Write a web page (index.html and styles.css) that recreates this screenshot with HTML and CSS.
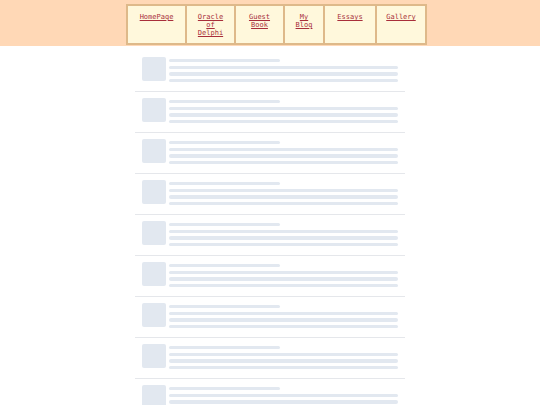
FILE: index.html
```html
<!DOCTYPE html>
<html>
<head>
<meta charset="utf-8">
<link rel="stylesheet" href="styles.css">
</head>
<body>
<header class="top">
  <nav class="nav">
    <a class="nav-item" href="#">HomePage</a>
    <a class="nav-item" href="#">Oracle<br>of<br>Delphi</a>
    <a class="nav-item" href="#">Guest<br>Book</a>
    <a class="nav-item" href="#">My<br>Blog</a>
    <a class="nav-item" href="#">Essays</a>
    <a class="nav-item" href="#">Gallery</a>
  </nav>
</header>
<main class="list">
  <div class="row"><div class="thumb"></div><div class="lines"><span class="ln short"></span><span class="ln"></span><span class="ln"></span><span class="ln"></span></div></div>
  <div class="row"><div class="thumb"></div><div class="lines"><span class="ln short"></span><span class="ln"></span><span class="ln"></span><span class="ln"></span></div></div>
  <div class="row"><div class="thumb"></div><div class="lines"><span class="ln short"></span><span class="ln"></span><span class="ln"></span><span class="ln"></span></div></div>
  <div class="row"><div class="thumb"></div><div class="lines"><span class="ln short"></span><span class="ln"></span><span class="ln"></span><span class="ln"></span></div></div>
  <div class="row"><div class="thumb"></div><div class="lines"><span class="ln short"></span><span class="ln"></span><span class="ln"></span><span class="ln"></span></div></div>
  <div class="row"><div class="thumb"></div><div class="lines"><span class="ln short"></span><span class="ln"></span><span class="ln"></span><span class="ln"></span></div></div>
  <div class="row"><div class="thumb"></div><div class="lines"><span class="ln short"></span><span class="ln"></span><span class="ln"></span><span class="ln"></span></div></div>
  <div class="row"><div class="thumb"></div><div class="lines"><span class="ln short"></span><span class="ln"></span><span class="ln"></span><span class="ln"></span></div></div>
  <div class="row"><div class="thumb"></div><div class="lines"><span class="ln short"></span><span class="ln"></span><span class="ln"></span><span class="ln"></span></div></div>
</main>
</body>
</html>
```
FILE: styles.css
```css
html, body {
  margin: 0;
  padding: 0;
  background: #ffffff;
  overflow: hidden;
}
body {
  font-family: "DejaVu Sans Mono", monospace;
}
.top {
  background: #ffd8b6;
  height: 46px;
  box-sizing: border-box;
  padding: 4px 0 0 126px;
}
.nav {
  display: flex;
  border: 1px solid #deb98a;
  width: max-content;
}
.nav-item {
  display: block;
  box-sizing: border-box;
  height: 39px;
  border: 1px solid #deb98a;
  background: #fff8dc;
  color: #a82e3a;
  font-size: 7px;
  line-height: 8px;
  text-align: center;
  padding-top: 7px;
}
.nav-item:nth-child(1) { width: 59px; }
.nav-item:nth-child(2) { width: 49px; }
.nav-item:nth-child(3) { width: 49px; }
.nav-item:nth-child(4) { width: 40px; }
.nav-item:nth-child(5) { width: 52px; }
.nav-item:nth-child(6) { width: 50px; }
.list {
  width: 270px;
  margin: 0 auto;
  padding-top: 5px;
}
.row {
  display: flex;
  align-items: flex-start;
  gap: 3px;
  height: 41px;
  box-sizing: border-box;
  padding: 6px 7px 0 7px;
  border-bottom: 1px solid #e5e7eb;
}
.thumb {
  width: 24px;
  height: 24px;
  flex: none;
  border-radius: 2px;
  background: #e2e8f0;
}
.lines {
  flex: 1;
  display: flex;
  flex-direction: column;
  gap: 3.4px;
  padding-top: 2px;
}
.ln {
  display: block;
  height: 3.3px;
  border-radius: 2px;
  background: #e2e8f0;
}
.ln.short {
  width: 111px;
}
```
